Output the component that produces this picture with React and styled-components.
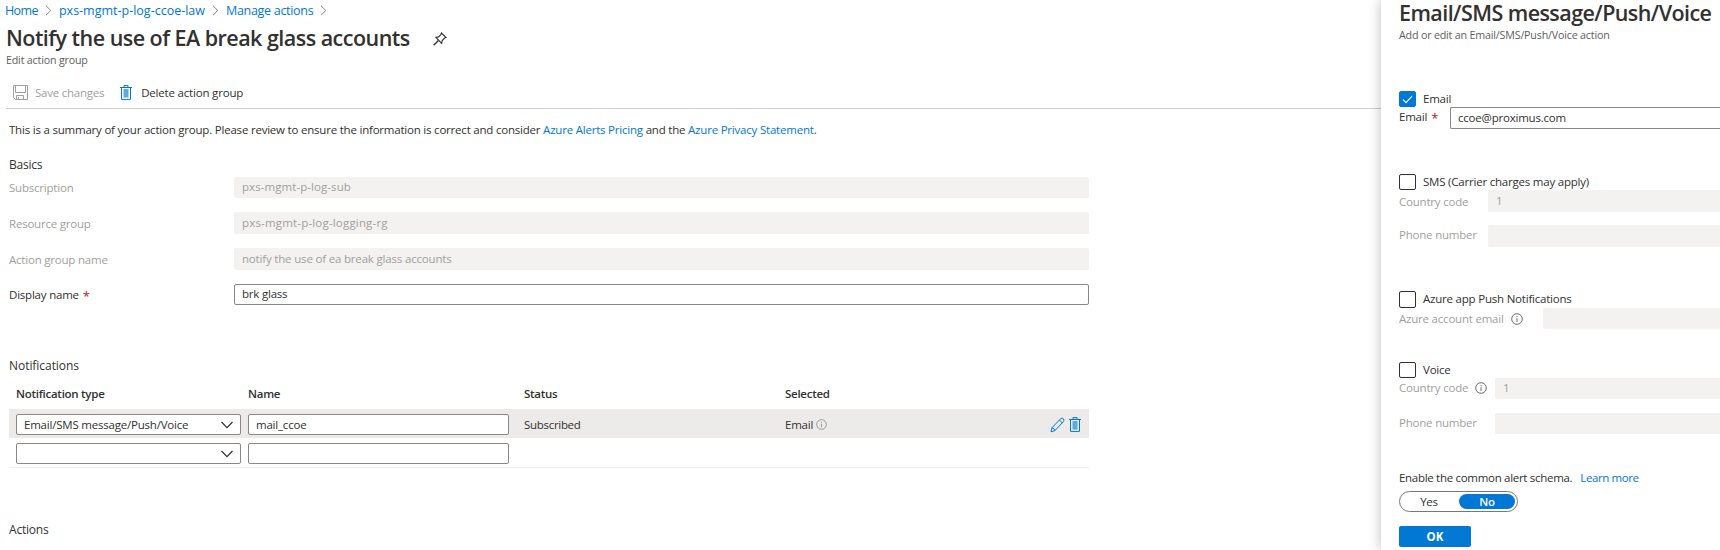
import React from 'react';
import styled, { createGlobalStyle } from 'styled-components';

const Global = createGlobalStyle`
  * { box-sizing: border-box; }
  html, body { margin: 0; background: #fff; }
  body {
    font-family: "Open Sans", "Noto Sans", sans-serif;
    font-size: 11.5px;
    letter-spacing: -0.21px;
    color: #323130;
    overflow: hidden;
  }
`;

const Page = styled.div`
  display: flex;
  width: 1720px;
  height: 550px;
  overflow: hidden;
  white-space: nowrap;
`;

const Main = styled.main`
  width: 1381px;
  flex: none;
`;

const Text = styled.span`
  letter-spacing: ${(p) => p.$track ?? -0.21}px;
`;

const Link = styled.a`
  color: #0078d4;
  letter-spacing: ${(p) => p.$track ?? -0.21}px;
`;

const Breadcrumb = styled.nav`
  display: flex;
  align-items: center;
  height: 21px;
  padding-left: 5px;
  font-size: 12.5px;
  svg { margin: 0 7px; }
`;

const TitleBar = styled.div`
  display: flex;
  align-items: center;
  height: 29px;
  margin-top: 3px;
  padding-left: 6px;
  gap: 23px;
`;

const Title = styled.h1`
  margin: 0;
  padding-bottom: 2px;
  font-size: 21.5px;
  line-height: 27px;
  font-weight: 600;
  letter-spacing: ${(p) => p.$track}px;
`;

const Subtitle = styled.div`
  height: 14px;
  line-height: 14px;
  font-size: 10.7px;
  letter-spacing: -0.18px;
  color: #605e5c;
`;

const MainSubtitle = styled(Subtitle)`
  padding-left: 6px;
`;

const Toolbar = styled.div`
  display: flex;
  align-items: center;
  height: 31px;
  margin: 11px 0 0 6px;
  padding-left: 7px;
  border-bottom: 1px solid #d2d0ce;
`;

const Command = styled.div`
  display: flex;
  align-items: center;
  gap: ${(p) => p.$gap}px;
  margin-right: 16px;
  padding-bottom: 2px;
  color: ${(p) => (p.$disabled ? '#a19f9d' : '#323130')};
`;

const Content = styled.div`
  width: 1080px;
  margin-left: 9px;
`;

const Summary = styled.p`
  margin: 11px 0 15px;
  line-height: 20px;
`;

const SectionTitle = styled.h2`
  margin: 0;
  font-size: 12px;
  font-weight: 400;
  line-height: 20px;
  margin-top: ${(p) => p.$top ?? 0}px;
`;

const FormRows = styled.div`
  display: grid;
  grid-template-columns: 225px 855px;
  grid-template-rows: 21px 22px 22px 21px;
  row-gap: 14px;
  margin-top: 2px;
`;

const Label = styled.label`
  display: flex;
  align-items: center;
  padding-bottom: ${(p) => p.$lift ?? 0}px;
  color: ${(p) => (p.$disabled ? '#a19f9d' : '#323130')};
`;

const Required = styled.span`
  margin-left: 4px;
  padding-top: 2px;
  line-height: 16px;
  color: #a4262c;
  font-size: 13px;
`;

const Field = styled.div`
  display: flex;
  align-items: center;
  justify-content: space-between;
  padding: 0 7px 2px;
  border: 1px solid ${(p) => (p.$disabled ? '#f3f2f1' : '#8a8886')};
  border-radius: 2px;
  background: ${(p) => (p.$disabled ? '#f3f2f1' : '#fff')};
  color: ${(p) => (p.$disabled ? '#a19f9d' : '#323130')};
`;

const TableRow = styled.div`
  display: grid;
  grid-template-columns: 225px 261px 254px 258px 1fr;
  column-gap: 7px;
  height: ${(p) => (p.$last ? 30 : 29)}px;
  padding: 5px 7px 3px;
  background: ${(p) => (p.$active ? '#edebe9' : 'transparent')};
  border-bottom: ${(p) => (p.$last ? '1px solid #f0efed' : 'none')};
  ${Field} { padding-bottom: 0; }
`;

const TableHead = styled(TableRow)`
  height: 30px;
  margin-top: 3px;
  padding: 0 7px 1px;
  align-items: center;
  font-weight: 600;
  letter-spacing: -0.27px;
`;

const Cell = styled.div`
  display: flex;
  align-items: center;
  gap: ${(p) => p.$gap ?? 0}px;
  padding-left: ${(p) => p.$inset ?? 0}px;
`;

const Panel = styled.aside`
  position: relative;
  width: 339px;
  height: 550px;
  padding-left: 18px;
  flex: none;
  background: #fff;
  box-shadow: 0 0 12px rgba(0, 0, 0, 0.26);
`;

const PanelTitle = styled(Title)`
  line-height: 26px;
`;

const Group = styled.section`
  margin-top: ${(p) => p.$top}px;
`;

const CheckRow = styled.div`
  display: flex;
  align-items: center;
  gap: 7px;
  height: ${(p) => p.$height ?? 16}px;
  > ${Text} { padding-bottom: 2px; }
`;

const Box = styled.span`
  display: flex;
  align-items: center;
  justify-content: center;
  width: 17px;
  height: 100%;
  border: 1px solid ${(p) => (p.$checked ? '#0078d4' : '#323130')};
  border-radius: 2px;
  background: ${(p) => (p.$checked ? '#0078d4' : '#fff')};
`;

const PanelField = styled.div`
  display: grid;
  grid-template-columns: ${(p) => p.$label}px 1fr;
  height: ${(p) => p.$height ?? 22}px;
  margin-top: ${(p) => p.$top ?? 0}px;
  ${Field} { border-right: 0; border-radius: 2px 0 0 2px; }
  ${Label} svg { margin-left: 7px; }
`;

const Schema = styled.div`
  display: flex;
  align-items: center;
  gap: 8px;
  height: 20px;
  margin-top: 33px;
`;

const Toggle = styled.div`
  display: flex;
  width: 119px;
  height: 21px;
  margin-top: 4px;
  padding: 2px;
  border: 1px solid #7a7876;
  border-radius: 11px;
`;

const Choice = styled.span`
  display: flex;
  align-items: center;
  justify-content: center;
  width: ${(p) => (p.$on ? 56 : 57)}px;
  padding: ${(p) => (p.$on ? '0 0 1px' : '0 3px 1px 0')};
  border-radius: 8px;
  background: ${(p) => (p.$on ? '#0078d4' : 'transparent')};
  color: ${(p) => (p.$on ? '#fff' : '#323130')};
  font-weight: ${(p) => (p.$on ? 600 : 400)};
`;

const OkButton = styled.button`
  display: block;
  width: 72px;
  height: 21px;
  margin-top: 14px;
  padding: 0;
  border: 0;
  border-radius: 2px;
  background: #0078d4;
  color: #fff;
  font: 700 11.5px "Open Sans", sans-serif;
  line-height: 21px;
`;

const Crumb = () => (
  <svg width="7" height="11" viewBox="0 0 7 11" fill="none" stroke="#8a8886">
    <path d="M1 0.8 L5.8 5.5 L1 10.2" />
  </svg>
);

const Chevron = () => (
  <svg width="12" height="8" viewBox="0 0 12 8" fill="none" stroke="#323130" strokeWidth="1.2">
    <path d="M0.5 1 L6 6.6 L11.5 1" />
  </svg>
);

const Pin = () => (
  <svg width="14" height="14" viewBox="0 0 14 14" fill="none" stroke="#323130" strokeWidth="1.1">
    <path d="M8.4 1 L13 5.6 L11.6 6.1 L9.2 8.5 L8.7 11.3 L2.9 5.4 L5.6 4.9 L8 2.5 Z" />
    <path d="M5.4 8.6 L0.7 13.3" strokeWidth="1.4" />
  </svg>
);

const Save = () => (
  <svg width="15" height="15" viewBox="0 0 15 15" fill="none" stroke="#a19f9d">
    <path d="M0.5 0.5 H14.5 V14.5 H2.5 L0.5 12.5 Z" />
    <path d="M2.5 0.5 V7.5 H12.5 V0.5" />
    <path d="M3.5 14.5 V10.5 H10.5 V14.5 M5.5 12 V14.5" />
  </svg>
);

const Trash = () => (
  <svg width="12" height="15" viewBox="0 0 12 15" fill="none" stroke="#0078d4">
    <path d="M0 2.5 H12 M4 2.5 V0.6 H8 V2.5" />
    <path d="M1.5 2.5 V14.4 H10.5 V2.5" />
    <rect x="4" y="4.5" width="4" height="7.5" fill="#5ca9e4" stroke="#5ca9e4" />
  </svg>
);

const Pencil = () => (
  <svg width="15" height="16" viewBox="0 0 15 16" fill="none" stroke="#0078d4">
    <path d="M1 14.8 L2 10.7 L10.8 1.6 Q12.2 0.5 13.4 1.8 Q14.6 3.1 13.5 4.5 L4.9 13.6 Z" />
    <path d="M9.4 3 L12.3 5.9 M2 10.7 Q4.5 11 4.9 13.6" />
  </svg>
);

const Info = ({ size = 12, color = '#605e5c' }) => (
  <svg width={size} height={size} viewBox="0 0 12 12" fill="none" stroke={color}>
    <circle cx="6" cy="6" r="5.3" strokeWidth="0.9" />
    <path d="M6 5.2 V9 M6 3 V4.1" strokeWidth="0.9" />
  </svg>
);

const Check = () => (
  <svg width="11" height="9" viewBox="0 0 11 9" fill="none" stroke="#fff" strokeWidth="1.1">
    <path d="M1 4.6 L4 7.6 L10 1.2" />
  </svg>
);

export default function App() {
  return (
    <>
      <Global />
      <Page>
        <Main>
          <Breadcrumb>
            <Link $track={-0.6}>Home</Link><Crumb />
            <Link $track={0}>pxs-mgmt-p-log-ccoe-law</Link><Crumb />
            <Link $track={-0.3}>Manage actions</Link><Crumb />
          </Breadcrumb>
          <TitleBar>
            <Title $track={-0.53}>Notify the use of EA break glass accounts</Title>
            <Pin />
          </TitleBar>
          <MainSubtitle>Edit action group</MainSubtitle>
          <Toolbar>
            <Command $gap={7} $disabled><Save /><Text $track={-0.24}>Save changes</Text></Command>
            <Command $gap={9}><Trash /><Text $track={-0.19}>Delete action group</Text></Command>
          </Toolbar>
          <Content>
            <Summary>
              This is a summary of your action group. Please review to ensure the information is correct and consider{' '}
              <Link>Azure Alerts Pricing</Link> and the <Link>Azure Privacy Statement</Link>.
            </Summary>
            <SectionTitle>Basics</SectionTitle>
            <FormRows>
              <Label $disabled $lift={1}>Subscription</Label>
              <Field $disabled><Text $track={0.07}>pxs-mgmt-p-log-sub</Text></Field>
              <Label $disabled>Resource group</Label>
              <Field $disabled><Text $track={0.18}>pxs-mgmt-p-log-logging-rg</Text></Field>
              <Label $disabled>Action group name</Label>
              <Field $disabled><Text $track={-0.18}>notify the use of ea break glass accounts</Text></Field>
              <Label>Display name<Required>*</Required></Label>
              <Field>brk glass</Field>
            </FormRows>
            <SectionTitle $top={51}><Text $track={-0.05}>Notifications</Text></SectionTitle>
            <TableHead>
              <Cell>Notification type</Cell>
              <Cell>Name</Cell>
              <Cell $inset={8}>Status</Cell>
              <Cell $inset={8}>Selected</Cell>
            </TableHead>
            <TableRow $active>
              <Field>Email/SMS message/Push/Voice<Chevron /></Field>
              <Field>mail_ccoe</Field>
              <Cell $inset={8}><Text $track={-0.3}>Subscribed</Text></Cell>
              <Cell $inset={8} $gap={3}>Email<Info size={11} color="#8a8886" /></Cell>
              <Cell $gap={4} $inset={8}><Pencil /><Trash /></Cell>
            </TableRow>
            <TableRow $last>
              <Field><span /><Chevron /></Field>
              <Field />
            </TableRow>
            <SectionTitle $top={52}>Actions</SectionTitle>
          </Content>
        </Main>
        <Panel>
          <PanelTitle $track={-0.57}>Email/SMS message/Push/Voice</PanelTitle>
          <Subtitle>Add or edit an Email/SMS/Push/Voice action</Subtitle>
          <Group $top={49}>
            <CheckRow><Box $checked><Check /></Box><Text>Email</Text></CheckRow>
            <PanelField $label={51}>
              <Label $lift={3}>Email<Required>*</Required></Label>
              <Field>ccoe@proximus.com</Field>
            </PanelField>
          </Group>
          <Group $top={45}>
            <CheckRow><Box /><Text>SMS (Carrier charges may apply)</Text></CheckRow>
            <PanelField $label={89}>
              <Label $disabled>Country code</Label>
              <Field $disabled>1</Field>
            </PanelField>
            <PanelField $label={89} $top={13}>
              <Label $disabled $lift={3}>Phone number</Label>
              <Field $disabled />
            </PanelField>
          </Group>
          <Group $top={44}>
            <CheckRow $height={17}><Box /><Text>Azure app Push Notifications</Text></CheckRow>
            <PanelField $label={144} $height={21}>
              <Label $disabled>Azure account email<Info /></Label>
              <Field $disabled />
            </PanelField>
          </Group>
          <Group $top={33}>
            <CheckRow><Box /><Text>Voice</Text></CheckRow>
            <PanelField $label={96} $height={21}>
              <Label $disabled $lift={2}>Country code<Info /></Label>
              <Field $disabled>1</Field>
            </PanelField>
            <PanelField $label={96} $height={21} $top={14}>
              <Label $disabled $lift={2}>Phone number</Label>
              <Field $disabled />
            </PanelField>
          </Group>
          <Schema>
            <Text $track={-0.3}>Enable the common alert schema.</Text>
            <Link $track={-0.4}>Learn more</Link>
          </Schema>
          <Toggle><Choice>Yes</Choice><Choice $on>No</Choice></Toggle>
          <OkButton>OK</OkButton>
        </Panel>
      </Page>
    </>
  );
}
